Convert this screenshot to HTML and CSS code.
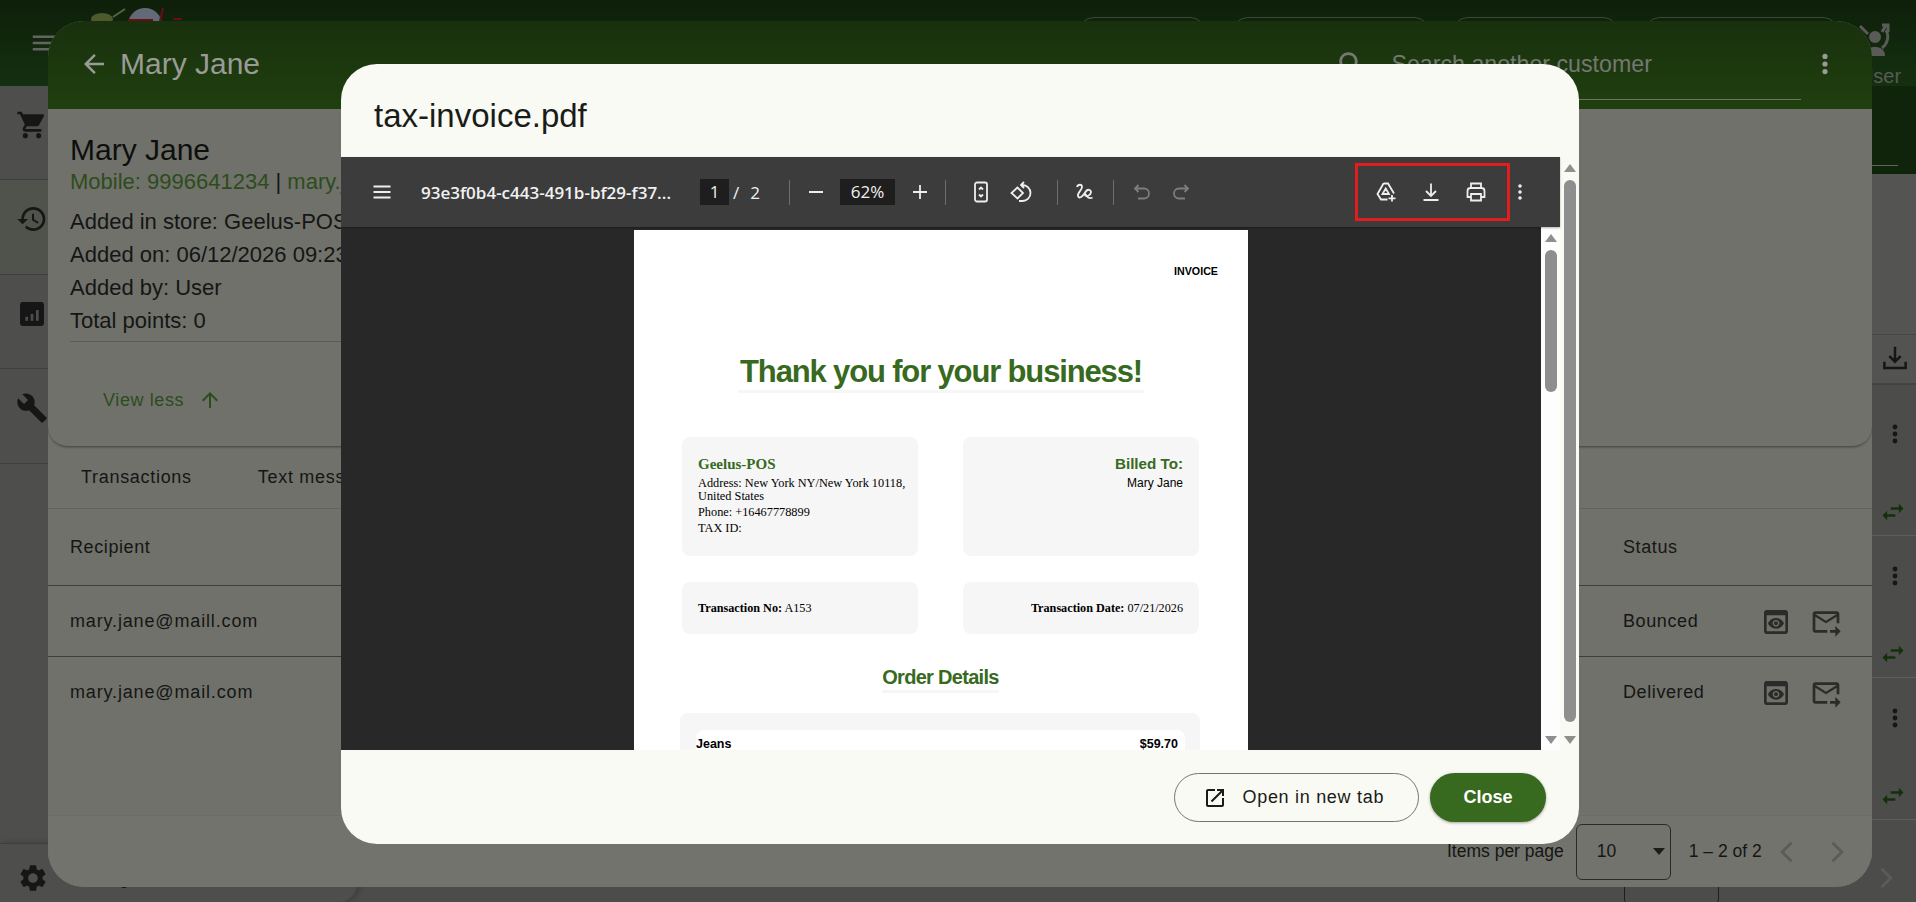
FILE: index.html
```html
<!DOCTYPE html>
<html>
<head>
    <title>Customer - tax-invoice.pdf</title>
    <meta name="viewport" content="width=device-width, initial-scale=1">
    <link rel="stylesheet" href="styles.css">
</head>
<body>
    <!-- app behind the dialogs -->
    <div class="app">
        <header class="app-bar">
            <svg class="app-menu" viewBox="0 0 24 24"><path d="M3 18h18v-2H3v2zm0-5h18v-2H3v2zm0-7v2h18V6H3z"/></svg>
            <div class="logo">
                <svg viewBox="0 0 100 30" width="100" height="30">
                    <ellipse cx="14" cy="11" rx="11" ry="6" fill="#4c5a2c"/>
                    <path d="M25 9 37 1" stroke="#5c6240" stroke-width="2" fill="none"/>
                    <circle cx="57" cy="17" r="17" fill="#626a78"/>
                    <path d="M75 0 72 13M40 12h25M85 11h9" stroke="#6b0d14" stroke-width="2" fill="none"/>
                </svg>
            </div>
            <div class="app-pills">
                <span class="pill pill-a"></span>
                <span class="pill pill-b"></span>
                <span class="pill pill-c"></span>
                <span class="pill pill-d"></span>
            </div>
            <div class="app-user">
                <svg viewBox="0 0 34 36" width="34" height="36"><path d="M4 4 12 12M30 3 26 10M26 3h6v7M30 8a14 14 0 0 1-4 18" stroke="#5a5a58" stroke-width="3" fill="none"/><circle cx="19" cy="15" r="6" fill="#5a5a58"/><path d="M9 34c0-7 5-9 10-9s10 2 10 9z" fill="#5a5a58"/></svg>
                <span>User</span>
            </div>
        </header>
        <div class="app-body">
            <nav class="sidebar">
                <div class="side-item"><svg viewBox="0 0 24 24"><path d="M7 18c-1.1 0-1.99.9-1.99 2S5.9 22 7 22s2-.9 2-2-.9-2-2-2zM1 2v2h2l3.6 7.59-1.35 2.45c-.16.28-.25.61-.25.96 0 1.1.9 2 2 2h12v-2H7.42c-.14 0-.25-.11-.25-.25l.03-.12.9-1.63h7.45c.75 0 1.41-.41 1.75-1.03l3.58-6.49c.08-.14.12-.31.12-.48 0-.55-.45-1-1-1H5.21l-.94-2H1zm16 16c-1.1 0-1.99.9-1.99 2s.89 2 1.99 2 2-.9 2-2-.9-2-2-2z"/></svg></div>
                <div class="side-item side-active"><svg viewBox="0 0 24 24"><path d="M13 3c-4.97 0-9 4.03-9 9H1l3.89 3.89.07.14L9 12H6c0-3.87 3.13-7 7-7s7 3.13 7 7-3.13 7-7 7c-1.93 0-3.68-.79-4.94-2.06l-1.42 1.42C8.27 19.99 10.51 21 13 21c4.97 0 9-4.03 9-9s-4.03-9-9-9zm-1 5v5l4.28 2.54.72-1.21-3.5-2.08V8H12z"/></svg></div>
                <div class="side-item"><svg viewBox="0 0 24 24"><path d="M19 3H5c-1.1 0-2 .9-2 2v14c0 1.1.9 2 2 2h14c1.1 0 2-.9 2-2V5c0-1.1-.9-2-2-2zM9 17H7v-3h2v3zm4 0h-2v-5h2v5zm4 0h-2V9h2v8z"/></svg></div>
                <div class="side-item"><svg viewBox="0 0 24 24"><path d="M22.7 19l-9.1-9.1c.9-2.3.4-5-1.5-6.9-2-2-5-2.4-7.4-1.3L9 6 6 9 1.6 4.7C.4 7.1.9 10.1 2.9 12.1c1.9 1.9 4.6 2.4 6.9 1.5l9.1 9.1c.4.4 1 .4 1.4 0l2.3-2.3c.5-.4.5-1.1.1-1.4z"/></svg></div>
                <div class="side-settings">
                    <svg viewBox="0 0 24 24"><path d="M19.14 12.94c.04-.3.06-.61.06-.94 0-.32-.02-.64-.07-.94l2.03-1.58c.18-.14.23-.41.12-.61l-1.92-3.32c-.12-.22-.37-.29-.59-.22l-2.39.96c-.5-.38-1.03-.7-1.62-.94l-.36-2.54c-.04-.24-.24-.41-.48-.41h-3.84c-.24 0-.43.17-.47.41l-.36 2.54c-.59.24-1.13.57-1.62.94l-2.39-.96c-.22-.08-.47 0-.59.22L2.74 8.87c-.12.21-.08.47.12.61l2.03 1.58c-.05.3-.09.63-.09.94s.02.64.07.94l-2.03 1.58c-.18.14-.23.41-.12.61l1.92 3.32c.12.22.37.29.59.22l2.39-.96c.5.38 1.03.7 1.62.94l.36 2.54c.05.24.24.41.48.41h3.84c.24 0 .44-.17.47-.41l.36-2.54c.59-.24 1.13-.56 1.62-.94l2.39.96c.22.08.47 0 .59-.22l1.92-3.32c.12-.22.07-.47-.12-.61l-2.01-1.58zM12 15.6c-1.98 0-3.6-1.62-3.6-3.6s1.62-3.6 3.6-3.6 3.6 1.62 3.6 3.6-1.62 3.6-3.6 3.6z"/></svg>
                    <span>Settings</span>
                </div>
            </nav>
            <main class="list">
                <div class="list-sub"><span class="list-sub-line"></span></div>
                <div class="list-head"></div>
                <div class="list-tools"><svg viewBox="0 0 24 24"><path d="M12 3v12M7.500 10.500 12 15l4.500-4.500M3.500 15v5h17v-5" fill="none" stroke="#161616" stroke-width="2"/></svg></div>
                <div class="list-row list-row-first">
                    <svg class="row-dots" viewBox="0 0 24 24"><circle cx="12" cy="5" r="2.400"/><circle cx="12" cy="12" r="2.400"/><circle cx="12" cy="19" r="2.400"/></svg>
                    <svg class="row-swap" viewBox="0 0 24 24"><path d="M6.990 11L3 15l3.990 4v-3H14v-2H6.990v-3zM21 9l-3.990-4v3H10v2h7.010v3L21 9z"/></svg>
                </div>
                <div class="list-row">
                    <svg class="row-dots" viewBox="0 0 24 24"><circle cx="12" cy="5" r="2.400"/><circle cx="12" cy="12" r="2.400"/><circle cx="12" cy="19" r="2.400"/></svg>
                    <svg class="row-swap" viewBox="0 0 24 24"><path d="M6.990 11L3 15l3.990 4v-3H14v-2H6.990v-3zM21 9l-3.990-4v3H10v2h7.010v3L21 9z"/></svg>
                </div>
                <div class="list-row">
                    <svg class="row-dots" viewBox="0 0 24 24"><circle cx="12" cy="5" r="2.400"/><circle cx="12" cy="12" r="2.400"/><circle cx="12" cy="19" r="2.400"/></svg>
                    <svg class="row-swap" viewBox="0 0 24 24"><path d="M6.990 11L3 15l3.990 4v-3H14v-2H6.990v-3zM21 9l-3.990-4v3H10v2h7.010v3L21 9z"/></svg>
                </div>
                <div class="list-foot">
                    <span class="list-select"></span>
                    <svg viewBox="0 0 24 24" width="28" height="28"><path d="M9 4l8 8-8 8" fill="none" stroke="#5b5b59" stroke-width="2.500"/></svg>
                </div>
            </main>
        </div>
    </div>

    <!-- customer dialog -->
    <section class="customer">
        <div class="customer-head">
            <svg class="back" viewBox="0 0 24 24"><path d="M20 11H7.830l5.590-5.590L12 4l-8 8 8 8 1.410-1.410L7.830 13H20v-2z"/></svg>
            <span class="customer-title">Mary Jane</span>
            <div class="customer-search">
                <svg viewBox="0 0 24 24"><path d="M15.500 14h-.790l-.280-.270C15.410 12.590 16 11.110 16 9.500 16 5.910 13.090 3 9.500 3S3 5.910 3 9.500 5.910 16 9.500 16c1.610 0 3.090-.590 4.230-1.570l.270.280v.790l5 4.990L20.490 19l-4.990-5zm-6 0C7.010 14 5 11.990 5 9.500S7.010 5 9.500 5 14 7.010 14 9.500 11.990 14 9.500 14z"/></svg>
                <span>Search another customer</span>
            </div>
            <svg class="head-dots" viewBox="0 0 24 24"><circle cx="12" cy="5" r="2.400"/><circle cx="12" cy="12" r="2.400"/><circle cx="12" cy="19" r="2.400"/></svg>
        </div>
        <div class="customer-card">
            <h1>Mary Jane</h1>
            <p class="contact">Mobile: 9996641234 <b>|</b> mary.jane@maill.com</p>
            <p class="meta">Added in store: Geelus-POS</p>
            <p class="meta">Added on: 06/12/2026 09:23</p>
            <p class="meta">Added by: User</p>
            <p class="meta">Total points: 0</p>
            <div class="card-rule"></div>
            <div class="view-less">View less
                <svg viewBox="0 0 24 24"><path d="M4 12l1.410 1.410L11 7.830V20h2V7.830l5.580 5.590L20 12l-8-8-8 8z"/></svg>
            </div>
        </div>
        <div class="tabs">
            <span class="tab">Transactions</span>
            <span class="tab">Text messages</span>
        </div>
        <div class="table">
            <div class="tr tr-head"><span>Recipient</span><span class="status">Status</span></div>
            <div class="tr">
                <span class="email">mary.jane@maill.com</span><span class="status">Bounced</span>
                <svg class="act act-view" viewBox="0 0 24 24"><path d="M19 3H5c-1.110 0-2 .900-2 2v14c0 1.100.890 2 2 2h14c1.100 0 2-.900 2-2V5c0-1.100-.890-2-2-2zm0 16H5V7h14v12zm-5.500-6c0 .830-.670 1.500-1.500 1.500s-1.500-.670-1.500-1.500.670-1.500 1.500-1.500 1.500.670 1.500 1.500zM12 9c-2.730 0-5.060 1.660-6 4 .940 2.340 3.270 4 6 4s5.060-1.660 6-4c-.940-2.340-3.270-4-6-4zm0 6.500c-1.380 0-2.500-1.120-2.500-2.500s1.120-2.500 2.500-2.500 2.500 1.120 2.500 2.500-1.120 2.500-2.500 2.500z"/></svg>
                <svg class="act act-send" viewBox="0 0 24 24"><path d="M20 4H4c-1.100 0-2 .900-2 2v12c0 1.100.900 2 2 2h9v-2H4V8l8 5 8-5v5h2V6c0-1.100-.900-2-2-2zm-8 7L4 6h16l-8 5zm7 4l4 4-4 4v-3h-4v-2h4v-3z"/></svg>
            </div>
            <div class="tr tr-last">
                <span class="email">mary.jane@mail.com</span><span class="status">Delivered</span>
                <svg class="act act-view" viewBox="0 0 24 24"><path d="M19 3H5c-1.110 0-2 .900-2 2v14c0 1.100.890 2 2 2h14c1.100 0 2-.900 2-2V5c0-1.100-.890-2-2-2zm0 16H5V7h14v12zm-5.500-6c0 .830-.670 1.500-1.500 1.500s-1.500-.670-1.500-1.500.670-1.500 1.500-1.500 1.500.670 1.500 1.500zM12 9c-2.730 0-5.060 1.660-6 4 .940 2.340 3.270 4 6 4s5.060-1.660 6-4c-.940-2.340-3.270-4-6-4zm0 6.500c-1.380 0-2.500-1.120-2.500-2.500s1.120-2.500 2.500-2.500 2.500 1.120 2.500 2.500-1.120 2.500-2.500 2.500z"/></svg>
                <svg class="act act-send" viewBox="0 0 24 24"><path d="M20 4H4c-1.100 0-2 .900-2 2v12c0 1.100.900 2 2 2h9v-2H4V8l8 5 8-5v5h2V6c0-1.100-.900-2-2-2zm-8 7L4 6h16l-8 5zm7 4l4 4-4 4v-3h-4v-2h4v-3z"/></svg>
            </div>
        </div>
        <div class="paginator">
            <span>Items per page</span>
            <div class="page-size"><span>10</span><i class="caret"></i></div>
            <span class="range">1 – 2 of 2</span>
            <svg class="pg-arrow" viewBox="0 0 24 24"><path d="M15 4l-8 8 8 8"/></svg>
            <svg class="pg-arrow" viewBox="0 0 24 24"><path d="M9 4l8 8-8 8"/></svg>
        </div>
    </section>

    <!-- pdf dialog -->
    <section class="pdf-dialog">
        <h2 class="pdf-title">tax-invoice.pdf</h2>
        <div class="viewer">
            <div class="viewer-main">
                <div class="toolbar">
                    <svg class="tb-icon tb-menu" viewBox="0 0 24 24"><path d="M3.500 6.500h17M3.500 12h17M3.500 17.500h17"/></svg>
                    <span class="file-name">93e3f0b4-c443-491b-bf29-f37...</span>
                    <span class="num-box page-box">1</span>
                    <span class="page-of">/</span>
                    <span class="page-total">2</span>
                    <span class="tb-sep sep-a"></span>
                    <svg class="tb-icon tb-minus" viewBox="0 0 24 24"><path d="M5 12h14"/></svg>
                    <span class="num-box zoom-box">62%</span>
                    <svg class="tb-icon tb-plus" viewBox="0 0 24 24"><path d="M5 12h14M12 5v14"/></svg>
                    <span class="tb-sep sep-b"></span>
                    <svg class="tb-icon tb-fit" viewBox="0 0 24 24"><rect x="6" y="2.500" width="12" height="19" rx="2"/><path d="M10 9.500l2-2 2 2M10 14.500l2 2 2-2"/></svg>
                    <svg class="tb-icon tb-rotate" viewBox="0 0 24 24"><path d="M8.500 7.500l-6 5.500 6 5.500 5.500-5.500zM12 5h1.500a8 8 0 0 1 0 16H10M15 2l-3 3 3 3"/></svg>
                    <span class="tb-sep sep-c"></span>
                    <svg class="tb-icon tb-ink" viewBox="0 0 24 24"><path d="M4 7c1-3 5-3 5 0 0 3-5 6-4 9 1 3 4 1 6-2s3-5 5.500-4c2.500 1 1.500 4.500-1 5.500-3 1-4.500-.500-3.500-2 2 3 3.500 6 7.500 4"/></svg>
                    <span class="tb-sep sep-d"></span>
                    <svg class="tb-icon tb-off tb-undo" viewBox="0 0 24 24"><path d="M8.500 5 5 8.500 8.500 12M5 8.500h9a5 5 0 0 1 0 10H8"/></svg>
                    <svg class="tb-icon tb-off tb-redo" viewBox="0 0 24 24"><path d="M15.500 5 19 8.500 15.500 12M19 8.500h-9a5 5 0 0 0 0 10h6"/></svg>
                    <div class="tb-marked">
                        <svg class="tb-icon" viewBox="0 0 24 24"><path d="M9.500 3.500h4.500L20 13.500M13.500 19.500H7L3.500 14 9.500 3.500M11.700 8.500l3.300 5.500H8.500zM18 15v6.500M14.500 18.300h7"/></svg>
                        <svg class="tb-icon" viewBox="0 0 24 24"><path d="M12 3.500v12.500M7 11l5 5 5-5M4.500 20h15"/></svg>
                        <svg class="tb-icon" viewBox="0 0 24 24"><path d="M7 8V3.500h10V8M7 17H3.500v-6a3 3 0 0 1 3-3h11a3 3 0 0 1 3 3v6H17M7 14h10v6.500H7z"/></svg>
                    </div>
                    <svg class="tb-more" viewBox="0 0 24 24"><circle cx="12" cy="6" r="1.800"/><circle cx="12" cy="12" r="1.800"/><circle cx="12" cy="18" r="1.800"/></svg>
                </div>
                <div class="doc-area">
                    <div class="doc">
                        <div class="page">
                            <div class="inv-label">INVOICE</div>
                            <div class="inv-thanks"><span>Thank you for your business!</span></div>
                            <div class="inv-grid inv-parties">
                                <div class="inv-box">
                                    <div class="inv-store">Geelus-POS</div>
                                    <div class="inv-line inv-address">Address: New York NY/New York 10118,<br>United States</div>
                                    <div class="inv-line">Phone: +16467778899</div>
                                    <div class="inv-line">TAX ID:</div>
                                </div>
                                <div class="inv-box inv-right">
                                    <div class="inv-billed">Billed To:</div>
                                    <div class="inv-customer">Mary Jane</div>
                                </div>
                            </div>
                            <div class="inv-grid inv-refs">
                                <div class="inv-box inv-ref"><span><b>Transaction No:</b> A153</span></div>
                                <div class="inv-box inv-ref inv-ref-right"><span><b>Transaction Date:</b> 07/21/2026</span></div>
                            </div>
                            <div class="inv-order"><span>Order Details</span></div>
                            <div class="inv-items">
                                <div class="inv-item"><span>Jeans</span><span>$59.70</span></div>
                            </div>
                        </div>
                    </div>
                    <div class="scrollbar scroll-inner">
                        <i class="arrow-up"></i><i class="thumb thumb-inner"></i><i class="arrow-down"></i>
                    </div>
                </div>
            </div>
            <div class="scrollbar scroll-outer">
                <i class="arrow-up"></i><i class="thumb thumb-outer"></i><i class="arrow-down"></i>
            </div>
        </div>
        <div class="pdf-actions">
            <button class="btn-open">
                <svg viewBox="0 0 24 24"><path d="M19 19H5V5h7V3H5c-1.110 0-2 .900-2 2v14c0 1.100.890 2 2 2h14c1.100 0 2-.900 2-2v-7h-2v7zM14 3v2h3.590l-9.830 9.830 1.410 1.410L19 6.410V10h2V3h-7z"/></svg>
                Open in new tab
            </button>
            <button class="btn-close">Close</button>
        </div>
    </section>
</body>
</html>
```

FILE: styles.css
```css
* {
    box-sizing: border-box;
}

html, body {
    margin: 0;
    height: 100%;
}

body {
    width: 1916px;
    height: 902px;
    position: relative;
    overflow: hidden;
    font-family: "Liberation Sans", Arial, sans-serif;
    color: #151614;
    background-color: #4c4c4a;
}

/* app behind the dialogs */
.app {
    height: 902px;
    display: flex;
    flex-direction: column;
}

.app-bar {
    height: 86px;
    flex: none;
    display: flex;
    background: linear-gradient(#0e1f0a, #143010);
}

.app-menu {
    width: 30px;
    height: 30px;
    margin: 28px 0 0 29px;
    fill: #62645f;
}

.logo {
    margin: 8px 0 0 29px;
    height: 13px;
    overflow: hidden;
}

.app-pills {
    display: flex;
    margin-left: 890px;
}

.pill {
    height: 60px;
    margin-top: 17px;
    border: 1px solid #3b4a36;
    border-radius: 16px;
}

.pill-a { width: 128px; margin-left: 0; }
.pill-b { width: 198px; margin-left: 26px; }
.pill-c { width: 167px; margin-left: 22px; }
.pill-d { width: 195px; margin-left: 25px; }

.app-user {
    margin-left: 17px;
    padding-top: 22px;
    color: #5a5a58;
    font-size: 20px;
    line-height: 20px;
    display: flex;
    flex-direction: column;
    align-items: center;
    gap: 8px;
}

.app-user svg {
    margin-right: 14px;
}

.app-body {
    flex: 1;
    display: flex;
    min-height: 0;
}

.sidebar {
    width: 48px;
    flex: none;
    display: flex;
    flex-direction: column;
    background-color: #4e4e4c;
}

.side-item {
    height: 94.500px;
    padding: 23px 0 0 16px;
    border-bottom: 1px solid #3f3f3d;
}

.side-item:first-child {
    height: 94px;
}

.side-item svg, .side-settings svg {
    width: 32px;
    height: 32px;
    fill: #161616;
}

.side-active {
    background-color: #50524c;
}

.side-settings {
    width: 357px;
    height: 59px;
    margin-top: auto;
    padding: 18px 0 0 17px;
    display: flex;
    align-items: flex-start;
    gap: 24px;
    font-size: 18px;
    background-color: #4e4e4c;
    border-top: 1px solid #3f3f3d;
    border-bottom-right-radius: 18px;
    box-shadow: 3px 0 6px rgba(0, 0, 0, .2);
}

.side-settings span {
    margin-top: 6px;
}

.list {
    flex: 1;
    display: flex;
    flex-direction: column;
    min-width: 0;
}

.list-sub {
    height: 88px;
    flex: none;
    background-color: #10240b;
    display: flex;
    justify-content: flex-end;
}

.list-sub-line {
    width: 40px;
    height: 1px;
    margin: 79px 18px 0 0;
    background-color: #5d6659;
}

.list-head {
    height: 161px;
    flex: none;
    background-color: #545452;
    border-bottom: 1px solid #474745;
}

.list-tools {
    height: 50px;
    flex: none;
    display: flex;
    justify-content: flex-end;
    padding: 8px 6px 0 0;
    background-color: #535351;
    border-bottom: 2px solid #434341;
}

.list-tools svg {
    width: 30px;
    height: 30px;
}

.list-row {
    height: 142px;
    flex: none;
    display: flex;
    flex-direction: column;
    align-items: flex-end;
    padding: 28px 9px 0 0;
    border-bottom: 1px solid #5d5d5b;
}

.list-row-first {
    height: 151px;
    padding-top: 37px;
}

.row-dots {
    width: 24px;
    height: 24px;
    fill: #161616;
}

.row-swap {
    width: 28px;
    height: 28px;
    margin-top: 52px;
    fill: #14300b;
}

.list-foot {
    flex: 1;
    display: flex;
    justify-content: flex-end;
    position: relative;
    padding: 44px 17px 0 0;
}

.list-select {
    position: absolute;
    left: 1576px;
    top: 20px;
    width: 95px;
    height: 65px;
    border: 1px solid #1f1f1e;
    border-radius: 6px;
}

/* customer dialog */
.customer {
    position: absolute;
    left: 48px;
    top: 21px;
    width: 1824px;
    height: 866px;
    display: flex;
    flex-direction: column;
    background-color: #70716b;
    border-radius: 36px;
    overflow: hidden;
}

.customer-head {
    height: 88px;
    flex: none;
    display: flex;
    background: linear-gradient(#19300e, #1f400e);
    color: #9a9b97;
}

.back {
    width: 30px;
    height: 30px;
    margin: 28px 0 0 31px;
    fill: #9a9b97;
}

.customer-title {
    margin: 26px 0 0 11px;
    font-size: 30px;
    line-height: 34px;
}

.customer-search {
    width: 470px;
    height: 79px;
    margin-left: auto;
    padding: 30px 0 0 3.500px;
    border-bottom: 1px solid #70716b;
    display: flex;
    gap: 23px;
    font-size: 23.200px;
    line-height: 26px;
    color: #767773;
}

.customer-search svg {
    width: 34px;
    height: 34px;
    margin-top: -3px;
    fill: #767773;
}

.head-dots {
    width: 26px;
    height: 26px;
    margin: 30px 34px 0 11px;
    fill: #9a9b97;
}

.customer-card {
    height: 338px;
    flex: none;
    padding: 24px 22px 0;
    border-bottom: 1px solid #50514c;
    border-radius: 0 0 20px 20px;
    box-shadow: 0 1px 2px rgba(0, 0, 0, .2);
}

.customer-card h1 {
    width: fit-content;
    margin: 0;
    font-size: 30px;
    font-weight: 400;
    line-height: 34px;
    color: #0e0f0d;
}

.contact {
    margin: 0 0 8px;
    font-size: 22px;
    line-height: 30px;
    color: #2d4c1c;
    white-space: nowrap;
}

.contact b {
    font-weight: 400;
    color: #151614;
}

.meta {
    margin: 0;
    font-size: 22px;
    line-height: 33px;
    white-space: nowrap;
}

.card-rule {
    width: 400px;
    height: 1px;
    margin-top: 4px;
    background-color: #5a5b56;
}

.view-less {
    display: flex;
    align-items: center;
    gap: 14px;
    margin: 46px 0 0 33px;
    font-size: 18px;
    letter-spacing: .6px;
    line-height: 24px;
    color: #2d4c1c;
}

.view-less svg {
    width: 24px;
    height: 24px;
    fill: #2d4c1c;
}

.tabs {
    height: 62px;
    flex: none;
    display: flex;
    gap: 66px;
    padding: 19px 0 0 33px;
    font-size: 18px;
    letter-spacing: .7px;
    line-height: 22px;
    border-bottom: 1px solid #62635e;
}

.table {
    flex: 1;
    font-size: 18px;
    letter-spacing: .6px;
}

.tr {
    height: 71px;
    padding: 23px 0 0 22px;
    display: flex;
    position: relative;
    line-height: 24px;
    border-bottom: 1px solid #3e3f3b;
}

.tr-head {
    height: 77px;
    padding-top: 26px;
}

.tr-last {
    border-bottom: none;
}

.email {
    letter-spacing: .85px;
}

.status {
    position: absolute;
    left: 1575px;
}

.act {
    position: absolute;
    top: 20px;
    width: 32px;
    height: 32px;
    fill: #2b2c29;
}

.act-view { left: 1712px; }
.act-send { left: 1762px; }

.paginator {
    height: 71px;
    flex: none;
    display: flex;
    align-items: center;
    padding-left: 1399px;
    font-size: 17.500px;
    background-color: #72736d;
    box-shadow: 0 -1px 0 #6c6d67;
}

.page-size {
    width: 95px;
    height: 56px;
    margin-left: 12px;
    padding: 0 5px 0 20px;
    display: flex;
    align-items: center;
    justify-content: space-between;
    border: 1px solid #2a2b28;
    border-radius: 6px;
}

.caret {
    width: 0;
    height: 0;
    border-left: 6px solid transparent;
    border-right: 6px solid transparent;
    border-top: 7px solid #1b1b1a;
}

.range {
    margin-left: 18px;
}

.pg-arrow {
    width: 28px;
    height: 28px;
    margin-left: 12px;
    fill: none;
    stroke: #5b5c57;
    stroke-width: 2.500;
}

.pg-arrow + .pg-arrow {
    margin-left: 20px;
}

/* pdf dialog */
.pdf-dialog {
    position: absolute;
    left: 341px;
    top: 64px;
    width: 1238px;
    height: 780px;
    display: flex;
    flex-direction: column;
    background-color: #f9faf4;
    border-radius: 36px;
    overflow: hidden;
}

.pdf-title {
    height: 93px;
    flex: none;
    margin: 0;
    padding: 32px 0 0 33px;
    font-size: 33px;
    font-weight: 400;
    line-height: 40px;
    color: #1a1c18;
}

.viewer {
    height: 593px;
    flex: none;
    display: flex;
}

.viewer-main {
    width: 1219px;
    display: flex;
    flex-direction: column;
}

.toolbar {
    height: 70px;
    flex: none;
    display: flex;
    align-items: center;
    padding-left: 29px;
    background-color: #3c3c3c;
    color: #f1f1f1;
    font-family: "Open Sans", "Noto Sans", sans-serif;
    font-size: 17px;
    box-shadow: 0 1px 2px rgba(0, 0, 0, .3);
    position: relative;
}

.tb-icon {
    width: 24px;
    height: 24px;
    flex: none;
    fill: none;
    stroke: #eeeeee;
    stroke-width: 1.800;
}

.tb-menu {
    stroke-width: 2;
}

.tb-off {
    stroke: #7d7d7d;
}

.file-name {
    width: 252px;
    margin-left: 27px;
    font-weight: 600;
    white-space: nowrap;
}

.num-box {
    height: 26px;
    line-height: 26px;
    text-align: center;
    background-color: #1e1e1e;
}

.page-box {
    width: 29px;
    margin-left: 27px;
}

.page-of {
    margin-left: 4px;
}

.page-total {
    margin-left: 11px;
}

.tb-sep {
    width: 1px;
    height: 25px;
    flex: none;
    background-color: #6e6e6e;
}

.sep-a { margin-left: 29px; }
.tb-minus { margin-left: 14px; }
.zoom-box { width: 55px; margin-left: 12px; }
.tb-plus { margin-left: 13px; }
.sep-b { margin-left: 13px; }
.tb-fit { margin-left: 23px; }
.tb-rotate { margin-left: 16px; }
.sep-c { margin-left: 24px; }
.tb-ink { margin-left: 15px; }
.sep-d { margin-left: 16px; }
.tb-undo { margin-left: 16px; }
.tb-redo { margin-left: 15px; }

.tb-marked {
    width: 155px;
    height: 58px;
    margin-left: auto;
    display: flex;
    align-items: center;
    gap: 21px;
    padding-left: 16px;
    border: 3px solid #e21d1d;
}

.tb-more {
    width: 24px;
    height: 24px;
    margin: 0 28px 0 -2px;
    fill: #eeeeee;
}

.doc-area {
    flex: 1;
    display: flex;
    min-height: 0;
}

.doc {
    flex: 1;
    min-width: 0;
    padding-top: 3px;
    display: flex;
    justify-content: center;
    overflow: hidden;
    background-color: #282828;
}

.scrollbar {
    width: 19px;
    flex: none;
    display: flex;
    flex-direction: column;
    align-items: center;
    background-color: #fdfdfd;
}

.arrow-up {
    width: 0;
    height: 0;
    flex: none;
    border-left: 6px solid transparent;
    border-right: 6px solid transparent;
    border-bottom: 8px solid #8e8e8e;
}

.arrow-down {
    width: 0;
    height: 0;
    flex: none;
    margin-top: auto;
    margin-bottom: 6px;
    border-left: 6px solid transparent;
    border-right: 6px solid transparent;
    border-top: 8px solid #8e8e8e;
}

.thumb {
    width: 12px;
    flex: none;
    border-radius: 6px;
    background-color: #8e8e8e;
}

.scroll-inner {
    padding-top: 7px;
}

.thumb-inner {
    height: 142px;
    margin-top: 8px;
}

.scroll-outer {
    padding-top: 7px;
    background-color: #f9faf4;
}

.thumb-outer {
    height: 542px;
    margin-top: 8px;
}

.pdf-actions {
    flex: 1;
    display: flex;
    justify-content: flex-end;
    gap: 11px;
    padding: 23px 33px 0 0;
}

.pdf-actions button {
    height: 49px;
    border-radius: 25px;
    font-family: inherit;
    font-size: 18px;
    cursor: pointer;
}

.btn-open {
    width: 245px;
    display: flex;
    align-items: center;
    gap: 15.500px;
    padding: 0 0 0 28px;
    color: #1a1c18;
    letter-spacing: .7px;
    background-color: transparent;
    border: 1px solid #74776e;
}

.btn-open svg {
    width: 24px;
    height: 24px;
    fill: #1a1c18;
}

.btn-close {
    width: 116px;
    font-weight: 700;
    color: #fff;
    background-color: #376a1e;
    border: none;
    box-shadow: 0 1px 3px rgba(0, 0, 0, .35);
}

/* invoice page */
.page {
    width: 614px;
    height: 560px;
    flex: none;
    background-color: #fff;
    color: #000;
}

.inv-label {
    padding: 34px 30px 0 0;
    font-size: 10.700px;
    font-weight: 700;
    line-height: 14px;
    text-align: right;
}

.inv-thanks {
    margin-top: 76px;
    text-align: center;
}

.inv-thanks span {
    display: inline-block;
    padding: 0 2px;
    font-size: 31px;
    font-weight: 700;
    line-height: 36px;
    letter-spacing: -1.150px;
    color: #376a1e;
    border-bottom: 3px solid #f6f6f6;
}

.inv-grid {
    display: grid;
    grid-template-columns: 236px 236px;
    column-gap: 45px;
    padding-left: 48px;
}

.inv-parties {
    margin-top: 44px;
}

.inv-refs {
    margin-top: 26px;
}

.inv-box {
    height: 119px;
    padding: 18px 15px 0 16px;
    font-family: "Liberation Serif", "Times New Roman", serif;
    font-size: 12.300px;
    background-color: #f6f6f6;
    border-radius: 8px;
}

.inv-store {
    font-size: 15px;
    font-weight: 700;
    line-height: 18px;
    color: #376a1e;
}

.inv-line {
    margin-top: 3px;
    line-height: 13px;
    white-space: nowrap;
}

.inv-address {
    margin-top: 4px;
}

.inv-right {
    text-align: right;
    padding-right: 16px;
}

.inv-billed {
    font-family: "Liberation Sans", Arial, sans-serif;
    font-size: 15.200px;
    font-weight: 700;
    line-height: 18px;
    color: #376a1e;
}

.inv-customer {
    margin-top: 4px;
    font-family: "Liberation Sans", Arial, sans-serif;
    font-size: 12px;
    line-height: 13px;
}

.inv-ref {
    height: 52px;
    padding: 0 16px;
    display: flex;
    align-items: center;
    font-size: 12.200px;
}

.inv-ref-right {
    justify-content: flex-end;
}

.inv-order {
    margin-top: 30px;
    padding-right: 1px;
    text-align: center;
}

.inv-order span {
    display: inline-block;
    font-size: 20px;
    font-weight: 700;
    line-height: 26px;
    letter-spacing: -.7px;
    color: #376a1e;
    border-bottom: 3px solid #f6f6f6;
}

.inv-items {
    width: 520px;
    height: 60px;
    margin: 20px 0 0 46px;
    padding: 17px 15px 0 16px;
    background-color: #f6f6f6;
    border-radius: 8px;
}

.inv-item {
    height: 40px;
    padding-right: 7px;
    display: flex;
    justify-content: space-between;
    font-size: 12.500px;
    font-weight: 700;
    line-height: 28px;
    background-color: #fff;
    border-radius: 8px;
}
```
